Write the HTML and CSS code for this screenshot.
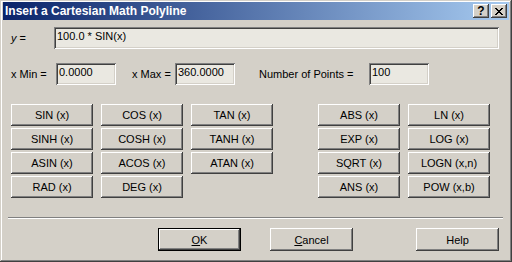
FILE: index.html
```html
<!DOCTYPE html>
<html lang="en">
<head>
    <meta charset="UTF-8">
    <title>Insert a Cartesian Math Polyline</title>
    <link rel="stylesheet" href="styles.css">
</head>
<body>
    <div class="window">
        <div class="titlebar">
            <span class="title">Insert a Cartesian Math Polyline</span>
            <div class="caption-buttons">
                <button class="cap-btn help-cap">?</button>
                <button class="cap-btn">
                    <svg width="8" height="7" viewBox="0 0 8 7">
                        <path d="M0 0h2v1H0zM6 0h2v1H6zM1 1h2v1H1zM5 1h2v1H5zM2 2h4v1H2zM3 3h2v1H3zM2 4h4v1H2zM1 5h2v1H1zM5 5h2v1H5zM0 6h2v1H0zM6 6h2v1H6z" fill="#000"/>
                    </svg>
                </button>
            </div>
        </div>

        <div class="content">
            <div class="row expr-row">
                <label class="lbl lbl-y"><i>y</i> =</label>
                <div class="field field-wide">100.0 * SIN(x)</div>
            </div>

            <div class="row range-row">
                <label class="lbl lbl-min">x Min =</label>
                <div class="field field-small">0.0000</div>
                <label class="lbl lbl-max">x Max =</label>
                <div class="field field-small">360.0000</div>
                <label class="lbl lbl-points">Number of Points =</label>
                <div class="field field-small">100</div>
            </div>

            <div class="func-area">
                <div class="func-grid trig">
                    <button class="btn">SIN (x)</button>
                    <button class="btn">COS (x)</button>
                    <button class="btn">TAN (x)</button>
                    <button class="btn">SINH (x)</button>
                    <button class="btn">COSH (x)</button>
                    <button class="btn">TANH (x)</button>
                    <button class="btn">ASIN (x)</button>
                    <button class="btn">ACOS (x)</button>
                    <button class="btn">ATAN (x)</button>
                    <button class="btn">RAD (x)</button>
                    <button class="btn">DEG (x)</button>
                </div>
                <div class="func-grid other">
                    <button class="btn">ABS (x)</button>
                    <button class="btn">LN (x)</button>
                    <button class="btn">EXP (x)</button>
                    <button class="btn">LOG (x)</button>
                    <button class="btn">SQRT (x)</button>
                    <button class="btn">LOGN (x,n)</button>
                    <button class="btn">ANS (x)</button>
                    <button class="btn">POW (x,b)</button>
                </div>
            </div>

            <div class="separator"></div>

            <div class="dialog-buttons">
                <button class="btn btn-dlg btn-default"><u>O</u>K</button>
                <button class="btn btn-dlg btn-cancel"><u>C</u>ancel</button>
                <button class="btn btn-dlg btn-help">Help</button>
            </div>
        </div>
    </div>
</body>
</html>
```

FILE: styles.css
```css
body {
    margin: 0;
    font-family: "Liberation Sans", Arial, sans-serif;
    font-size: 11px;
    color: #000;
    background: #d4d0c8;
}

.window {
    width: 512px;
    height: 262px;
    box-sizing: border-box;
    padding: 2px 3px 3px 3px;
    background: #d4d0c8;
    box-shadow: inset -1px -1px #404040, inset 1px 1px #d4d0c8,
                inset -2px -2px #808080, inset 2px 2px #fff;
}

.titlebar {
    height: 18px;
    display: flex;
    align-items: center;
    justify-content: space-between;
    padding: 0 2px 0 2px;
    background: linear-gradient(to right, #0a246a, #a6caf0);
}

.title {
    color: #fff;
    font-weight: bold;
    font-size: 12px;
}

.caption-buttons {
    display: flex;
    gap: 2px;
}

.cap-btn {
    width: 16px;
    height: 14px;
    padding: 0;
    border: none;
    background: #d4d0c8;
    display: flex;
    align-items: center;
    justify-content: center;
    font-family: "Liberation Sans", Arial, sans-serif;
    box-shadow: inset -1px -1px #404040, inset 1px 1px #fff,
                inset -2px -2px #808080, inset 2px 2px #d4d0c8;
}

.help-cap {
    font-weight: bold;
    font-size: 12px;
    line-height: 14px;
}

.content {
    padding: 7px 0 0 5px;
}

.row {
    display: flex;
    align-items: center;
}

.lbl {
    white-space: nowrap;
}

.lbl-y {
    width: 46px;
    padding-left: 3px;
    box-sizing: border-box;
}

.field {
    height: 22px;
    box-sizing: border-box;
    padding: 3px 0 0 3px;
    background: #eae8e1;
    box-shadow: inset 1px 1px #808080, inset -1px -1px #fff,
                inset 2px 2px #404040, inset -2px -2px #d4d0c8;
}

.field-wide {
    width: 445px;
}

.field-small {
    width: 60px;
}

.range-row {
    margin-top: 14px;
}

.lbl-min {
    padding-left: 3px;
    width: 48px;
    box-sizing: border-box;
}

.lbl-max {
    margin-left: 16px;
    width: 43px;
}

.lbl-points {
    margin-left: 24px;
    width: 110px;
}

.func-area {
    display: flex;
    margin-top: 19px;
    padding-left: 3px;
}

.func-grid {
    display: grid;
    grid-template-columns: repeat(3, 82px);
    grid-auto-rows: 22px;
    column-gap: 8px;
    row-gap: 2px;
}

.func-grid.other {
    grid-template-columns: repeat(2, 82px);
    margin-left: 45px;
}

.btn {
    padding: 0;
    border: none;
    background: #d4d0c8;
    font-family: "Liberation Sans", Arial, sans-serif;
    font-size: 11px;
    color: #000;
    box-shadow: inset -1px -1px #404040, inset 1px 1px #fff,
                inset -2px -2px #808080, inset 2px 2px #d4d0c8;
}

.separator {
    margin: 19px 0 0 0;
    width: 495px;
    height: 0;
    border-top: 1px solid #808080;
    border-bottom: 1px solid #fff;
}

.dialog-buttons {
    display: flex;
    margin-top: 9px;
}

.btn-dlg {
    width: 83px;
    height: 23px;
}

.btn-default {
    margin-left: 150px;
    box-shadow: inset 0 0 0 1px #000, inset -2px -2px #404040, inset 2px 2px #fff,
                inset -3px -3px #808080;
}

.btn-cancel {
    margin-left: 29px;
}

.btn-help {
    margin-left: 63px;
}
```
